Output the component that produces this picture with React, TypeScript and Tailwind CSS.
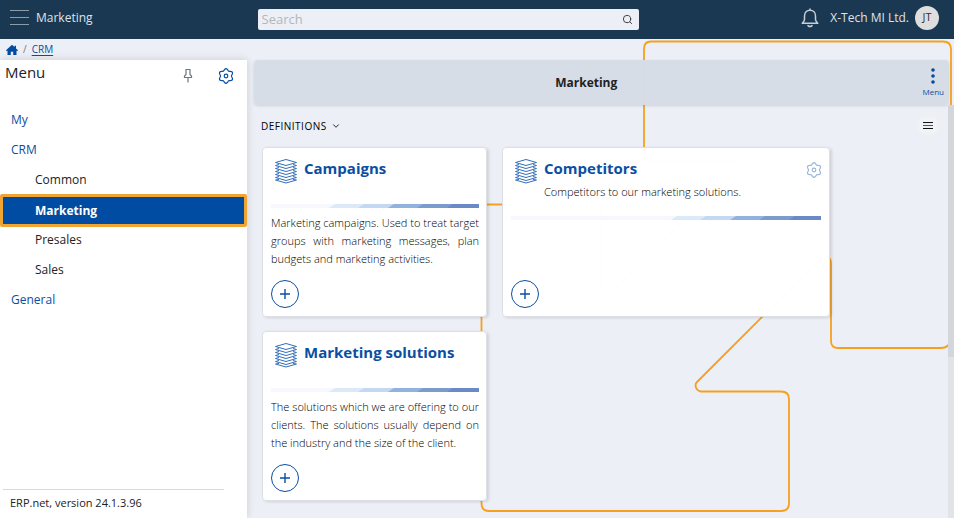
import type { ReactNode } from "react";
import { ChevronDown, Search } from "lucide-react";

// Six-lobed gear outline: a circle whose radius swells once every 60 degrees.
const gearOutline =
  Array.from({ length: 72 }, (_, i) => {
    const t = (i * Math.PI) / 36;
    const r = 6.4 + 0.95 * Math.cos(6 * t);
    return `${i ? "L" : "M"}${(8 + r * Math.sin(t)).toFixed(2)} ${(8 - r * Math.cos(t)).toFixed(2)}`;
  }).join("") + "Z";

function GearIcon({ className }: { className: string }) {
  return (
    <svg viewBox="0 0 16 16" className={`size-4 ${className}`} fill="none" stroke="currentColor" strokeWidth="1.2" aria-hidden="true">
      <path d={gearOutline} />
      <circle cx="8" cy="8" r="1.8" />
    </svg>
  );
}

function LayersIcon() {
  const rows = [7, 10, 13, 16, 19];
  return (
    <svg viewBox="0 0 24 26" className="h-[26px] w-6 shrink-0" fill="none" stroke="#3370bb" strokeWidth="1" aria-hidden="true">
      <path d="M1.5 4.5 12 1.5 22.5 4.5 12 7.5Z" />
      {rows.map((y) => (
        <path key={y} d={`M5 ${y - 0.5} 1.5 ${y + 0.5} 12 ${y + 3.5} 22.5 ${y + 0.5} 19 ${y - 0.5}`} />
      ))}
      <path d="M5 21.5 1.5 22 12 25 22.5 22 19 21.5" />
    </svg>
  );
}

function HomeIcon() {
  return (
    <svg viewBox="0 0 12 12" className="size-3" fill="#004ca3" aria-hidden="true">
      <path d="M6 .8 0 6.300.8 7.200 1.500 6.600V11H4.800V7.800H7.200V11H10.500V6.600L11.200 7.200 12 6.300 10 4.400V1.700H8.500V3.100Z" />
    </svg>
  );
}

function PinIcon() {
  return (
    <svg viewBox="0 0 10 16" className="h-4 w-2.5" fill="none" stroke="#6f7780" strokeWidth="1.200" aria-hidden="true">
      <path d="M3 1.500H7V6.500L8.500 8V9.500H1.500V8L3 6.500ZM5 9.500V14.500" />
    </svg>
  );
}

function BellIcon() {
  return (
    <svg viewBox="0 0 18 20" className="h-5 w-[18px]" fill="none" stroke="#c6ced6" strokeWidth="1.500" strokeLinejoin="round" strokeLinecap="round" aria-hidden="true">
      <path d="M9 1V2.200M3.500 8C3.500 4.500 5.800 2.300 9 2.300S14.500 4.500 14.500 8V11.500Q14.500 13 16.800 15.200H1.200Q3.500 13 3.500 11.500ZM7 17.600Q9 19.600 11 17.600" />
    </svg>
  );
}

function CircuitBackdrop() {
  return (
    <svg
      className="pointer-events-none absolute top-0 left-0 h-[518px] w-[954px]"
      viewBox="0 0 954 518"
      fill="none"
      stroke="#f5a11f"
      strokeWidth="1.800"
      aria-hidden="true"
    >
      <path d="M470 204.500H594Q601 204.500 601 211V288Q602 299 611 293L735 171Q741 161 732 161H651Q644 161 644 154V49Q644 41.500 651 41.500H943Q951 41.500 951 49V140" />
      <path d="M481.500 300V503Q481.500 511 489 511H781Q789 511 789 503V399Q789 391.500 781 391.500H702C696 391.500 694 385 697 382L819 260Q831 252 831 264V341Q831 348 838 348H941Q949 348 951 340" />
    </svg>
  );
}

function AccentBar() {
  return (
    <div className="flex h-1 justify-end bg-[#f6f8fe]">
      <svg viewBox="0 0 150 4" className="h-1 w-[150px]" aria-hidden="true">
        <path d="M0 4 6 0H150V4Z" fill="#dbe9f8" />
        <path d="M29 4 35 0H150V4Z" fill="#c4d8f1" />
        <path d="M59 4 65 0H150V4Z" fill="#91b2de" />
        <path d="M88 4 94 0H150V4Z" fill="#7b9ace" />
        <path d="M118 4 124 0H150V4Z" fill="#6a8ac5" />
      </svg>
    </div>
  );
}

type CardProps = { title: string; wide?: boolean; subtitle?: string; action?: ReactNode; children?: ReactNode };

function Card({ title, wide, subtitle, action, children }: CardProps) {
  return (
    <article
      className={`flex min-h-[170px] flex-col rounded border border-[#dcdfe3] bg-white/99 pb-2 pl-2 shadow-[2px_1px_3px_rgba(0,0,0,0.12)] ${
        wide ? "w-[328px] pr-2" : "w-[225px] pr-[7px]"
      }`}
    >
      <div className={`flex gap-1.5 pt-2.5 pl-[3px] ${wide ? "h-[68px]" : "h-14"}`}>
        <LayersIcon />
        <div className="min-w-0 flex-1">
          <h2 className="text-[15px] leading-5 font-bold text-[#0b4ea2]">{title}</h2>
          {subtitle && <p className="mt-[5px] text-[11px] leading-[18px] font-light text-black">{subtitle}</p>}
        </div>
        {action}
      </div>
      <AccentBar />
      {children && <p className="mt-1.5 text-justify text-[11px] leading-[18px] font-light text-black">{children}</p>}
      <button
        type="button"
        aria-label={`Add ${title}`}
        className="mt-auto flex size-7 items-center justify-center rounded-full border border-[#0b4ea2] bg-white"
      >
        <svg viewBox="0 0 12 12" className="size-3" stroke="#0b4ea2" strokeWidth="1.400" aria-hidden="true">
          <path d="M6 1v10M1 6h10" />
        </svg>
      </button>
    </article>
  );
}

function NavLink({ label, child, active }: { label: string; child?: boolean; active?: boolean }) {
  const look = active
    ? "-mt-px -mb-0.5 h-[33px] rounded-xs border-3 border-[#f0a431] bg-[#004ca3] pl-8 font-bold text-white"
    : child
      ? "h-[30px] pl-[35px]"
      : "h-[30px] pl-[11px] text-[#0b4ea2]";
  return (
    <li>
      <a href="#" aria-current={active ? "page" : undefined} className={`flex items-center ${look}`}>
        {label}
      </a>
    </li>
  );
}

export default function App() {
  return (
    <div className="relative flex min-h-screen flex-col bg-[#eceff5] font-['Open_Sans','Noto_Sans',sans-serif] text-xs text-[#222]">
      <CircuitBackdrop />
      <header className="relative flex h-[39px] items-center bg-[#1a3851] text-[#dfe3e8]">
        <div className="flex w-[27%] items-center gap-[7px] pb-1 pl-2.5">
          <button type="button" aria-label="Toggle menu" className="flex h-[15px] w-[19px] flex-col justify-between">
            <span className="h-px w-full bg-[#8c9ba8]" />
            <span className="h-px w-full bg-[#8c9ba8]" />
            <span className="h-px w-full bg-[#8c9ba8]" />
          </button>
          <span className="font-medium">Marketing</span>
        </div>
        <div className="flex h-[21px] w-[40%] items-center rounded-xs bg-[#eceff5] pr-1.5 pl-1">
          <input
            type="search"
            aria-label="Search"
            placeholder="Search"
            className="min-w-0 flex-1 bg-transparent text-[13px] text-[#222] outline-none placeholder:text-[#b3b7bb]"
          />
          <Search className="size-[11px] text-[#333]" />
        </div>
        <div className="flex flex-1 items-center justify-end pr-[15px] pb-1">
          <button type="button" aria-label="Notifications">
            <BellIcon />
          </button>
          <span className="ml-[11px]">X-Tech MI Ltd.</span>
          <span className="ml-1.5 flex size-6 items-center justify-center rounded-full bg-[#dedede] text-[11px] text-[#333]">JT</span>
        </div>
      </header>

      <nav aria-label="Breadcrumb" className="relative flex h-[21px] items-center pl-1.5 text-[10px]">
        <a href="#" aria-label="Home">
          <HomeIcon />
        </a>
        <span className="mx-[5px] text-[#777]">/</span>
        <a href="#" className="text-[#0b4ea2] underline underline-offset-2">
          CRM
        </a>
      </nav>

      <div className="relative flex flex-1">
        <aside className="flex w-[247px] shrink-0 flex-col bg-white shadow-[0_0_8px_rgba(0,0,0,0.14)]">
          <div className="flex h-8 items-center pr-[13px] pl-[5px]">
            <h2 className="mb-2 flex-1 text-[15px]">Menu</h2>
            <button type="button" aria-label="Pin menu">
              <PinIcon />
            </button>
            <button type="button" aria-label="Menu settings" className="ml-[25px]">
              <GearIcon className="text-[#0b4ea2]" />
            </button>
          </div>
          <nav aria-label="Modules" className="mt-[13px]">
            <ul>
              <NavLink label="My" />
              <NavLink label="CRM" />
              <NavLink label="Common" child />
              <NavLink label="Marketing" child active />
              <NavLink label="Presales" child />
              <NavLink label="Sales" child />
              <NavLink label="General" />
            </ul>
          </nav>
          <footer className="mt-auto mr-[23px] ml-[3px] h-[29px] border-t border-[#d9d9d9] pt-1.5 pl-[7px] text-[11px]">
            ERP.net, version 24.1.3.96
          </footer>
        </aside>

        <div className="ml-[7px] flex min-w-0 flex-1 flex-col">
          <div className="mr-[5px] flex h-[45px] items-center rounded bg-[#d6dce6]/98 pr-[5px] shadow-[0_1px_3px_rgba(0,0,0,0.12)]">
            <h1 className="flex-1 pr-1 text-center text-xs font-bold">Marketing</h1>
            <button type="button" className="flex flex-col items-center gap-0.5 text-[8px] leading-3 text-[#0b4ea2]">
              <svg viewBox="0 0 4 16" className="h-4 w-1" fill="#004ca3" aria-hidden="true">
                <circle cx="2" cy="2" r="1.800" />
                <circle cx="2" cy="8" r="1.800" />
                <circle cx="2" cy="14" r="1.800" />
              </svg>
              Menu
            </button>
          </div>

          <div className="flex flex-1">
            <main className="min-w-0 flex-1">
              <div className="flex h-[42px] items-center pr-[15px] pl-[7px]">
                <button type="button" className="flex flex-1 items-center gap-1 pt-px text-[10px] tracking-wider text-black">
                  DEFINITIONS
                  <ChevronDown className="size-2.5" />
                </button>
                <button
                  type="button"
                  aria-label="Section menu"
                  className="mb-0.5 flex h-[7px] w-2.5 flex-col justify-between shadow-[0_0_6px_4px_rgba(255,255,255,0.4)]"
                >
                  <span className="h-px w-full bg-[#111]" />
                  <span className="h-px w-full bg-[#555]" />
                  <span className="h-px w-full bg-[#111]" />
                </button>
              </div>
              <div className="flex flex-wrap gap-x-[15px] gap-y-3.5 pl-2">
                <Card title="Campaigns">
                  Marketing campaigns. Used to treat target groups with marketing messages, plan budgets and marketing activities.
                </Card>
                <Card
                  title="Competitors"
                  wide
                  subtitle="Competitors to our marketing solutions."
                  action={
                    <button type="button" aria-label="Competitors settings" className="mt-1 -mr-px self-start">
                      <GearIcon className="text-[#9bb8dc]" />
                    </button>
                  }
                />
                <Card title="Marketing solutions">
                  The solutions which we are offering to our clients. The solutions usually depend on the industry and the size of the client.
                </Card>
              </div>
            </main>
            <div className="w-1.5 bg-[#e0e3e8]">
              <div className="h-[61%] bg-[#d3d6da]" />
            </div>
          </div>
        </div>
      </div>
    </div>
  );
}
